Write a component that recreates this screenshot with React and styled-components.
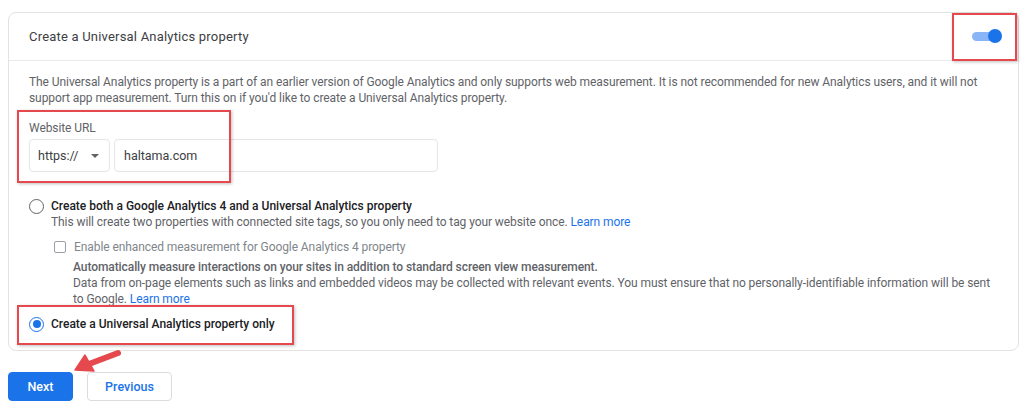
import React from 'react'
import styled, { createGlobalStyle } from 'styled-components'

const Global = createGlobalStyle`
  body {
    margin: 0;
    background: #fff;
    font-family: Roboto, "Liberation Sans", Arial, sans-serif;
    color: #3c4043;
  }
`

const Page = styled.div`
  position: relative;
  width: 1024px;
  height: 411px;
  padding: 12px 0 0 8px;
  box-sizing: border-box;
`

const Card = styled.div`
  width: 1011px;
  border: 1px solid #e3e3e3;
  border-radius: 8px;
  box-sizing: border-box;
`

const Header = styled.div`
  display: flex;
  align-items: center;
  justify-content: space-between;
  height: 47px;
  padding: 0 16px 0 20px;
  border-bottom: 1px solid #e8eaed;
`

const Title = styled.div`
  font-size: 13px;
  color: #3c4043;
  letter-spacing: 0.2px;
`

const Toggle = styled.div`
  position: relative;
  width: 30px;
  height: 14px;
  display: flex;
  align-items: center;
  margin-top: -1px;
`

const Track = styled.div`
  width: 26px;
  height: 9px;
  border-radius: 5px;
  background: #8ab4f8;
`

const Thumb = styled.div`
  position: absolute;
  right: 0;
  top: 0;
  width: 14px;
  height: 14px;
  border-radius: 50%;
  background: #1a73e8;
`

const Body = styled.div`
  padding: 13px 20px 18px 20px;
  display: flex;
  flex-direction: column;
`

const Text = styled.div`
  font-size: 12px;
  line-height: 16px;
  letter-spacing: -0.08px;
  color: ${p => p.$color || '#5f6368'};
  font-weight: ${p => (p.$bold ? 500 : 400)};
  margin-left: ${p => p.$indent || 0}px;
  margin-top: ${p => p.$top || 0}px;
`

const Link = styled.a`
  color: #1a73e8;
  text-decoration: none;
`

const FieldRow = styled.div`
  display: flex;
  gap: 4px;
  margin-top: 3px;
`

const Select = styled.div`
  width: 81px;
  height: 33px;
  box-sizing: border-box;
  border: 1px solid #e4e5e7;
  border-radius: 4px;
  display: flex;
  align-items: center;
  justify-content: space-between;
  padding: 0 10px 0 8px;
  font-size: 12.5px;
  color: #3c4043;
`

const Caret = styled.span`
  width: 0;
  height: 0;
  border-left: 4px solid transparent;
  border-right: 4px solid transparent;
  border-top: 4px solid #5f6368;
`

const Input = styled.div`
  width: 324px;
  height: 33px;
  box-sizing: border-box;
  border: 1px solid #e4e5e7;
  border-radius: 4px;
  display: flex;
  align-items: center;
  padding: 0 9px;
  font-size: 12.5px;
  color: #3c4043;
`

const Option = styled.div`
  display: flex;
  align-items: center;
  gap: 7px;
  margin-top: ${p => p.$top || 0}px;
  font-size: 12px;
  line-height: 16px;
  font-weight: 500;
  color: #202124;
`

const Radio = styled.span`
  width: 15px;
  height: 15px;
  box-sizing: border-box;
  border-radius: 50%;
  border: 1.5px solid ${p => (p.$on ? '#1a73e8' : '#5f6368')};
  display: flex;
  align-items: center;
  justify-content: center;
  &::after {
    content: '';
    display: ${p => (p.$on ? 'block' : 'none')};
    width: 8px;
    height: 8px;
    border-radius: 50%;
    background: #1a73e8;
  }
`

const CheckRow = styled.div`
  display: flex;
  align-items: center;
  gap: 8px;
  margin: 9px 0 0 25px;
  font-size: 12px;
  line-height: 16px;
  letter-spacing: -0.08px;
  color: #80868b;
`

const Checkbox = styled.span`
  width: 12px;
  height: 12px;
  box-sizing: border-box;
  border: 1px solid #9aa0a6;
  border-radius: 2px;
`

const Actions = styled.div`
  display: flex;
  gap: 14px;
  margin-top: 21px;
`

const Button = styled.button`
  height: 29px;
  width: ${p => p.$w}px;
  border-radius: 4px;
  font-family: inherit;
  font-size: 12.5px;
  font-weight: 500;
  cursor: pointer;
  background: ${p => (p.$primary ? '#1a73e8' : '#fff')};
  color: ${p => (p.$primary ? '#fff' : '#1a73e8')};
  border: 1px solid ${p => (p.$primary ? '#1a73e8' : '#dadce0')};
`

const Mark = styled.div`
  position: absolute;
  border: 2px solid #e5484d;
  box-shadow: 1px 1px 3px rgba(0, 0, 0, 0.25);
  pointer-events: none;
`

const Arrow = styled.svg`
  position: absolute;
  left: 72px;
  top: 347px;
`

export default function App() {
  return (
    <>
      <Global />
      <Page>
        <Card>
          <Header>
            <Title>Create a Universal Analytics property</Title>
            <Toggle>
              <Track />
              <Thumb />
            </Toggle>
          </Header>
          <Body>
            <Text>
              The Universal Analytics property is a part of an earlier version of Google Analytics and only supports web measurement. It is not recommended for new Analytics users, and it will not support app measurement. Turn this on if you'd like to create a Universal Analytics property.
            </Text>
            <Text $top={14}>Website URL</Text>
            <FieldRow>
              <Select>
                https://
                <Caret />
              </Select>
              <Input>haltama.com</Input>
            </FieldRow>
            <Option $top={26}>
              <Radio />
              Create both a Google Analytics 4 and a Universal Analytics property
            </Option>
            <Text $indent={22}>
              This will create two properties with connected site tags, so you only need to tag your website once. <Link>Learn more</Link>
            </Text>
            <CheckRow>
              <Checkbox />
              Enable enhanced measurement for Google Analytics 4 property
            </CheckRow>
            <Text $indent={44} $top={4} $bold>
              Automatically measure interactions on your sites in addition to standard screen view measurement.
            </Text>
            <Text $indent={44}>
              Data from on-page elements such as links and embedded videos may be collected with relevant events. You must ensure that no personally-identifiable information will be sent to Google. <Link>Learn more</Link>
            </Text>
            <Option $top={9}>
              <Radio $on />
              Create a Universal Analytics property only
            </Option>
          </Body>
        </Card>
        <Actions>
          <Button $primary $w={65}>Next</Button>
          <Button $w={85}>Previous</Button>
        </Actions>

        <Mark style={{ left: 952, top: 13, width: 61, height: 44 }} />
        <Mark style={{ left: 17, top: 110, width: 210, height: 69 }} />
        <Mark style={{ left: 17, top: 305, width: 273, height: 36 }} />
        <Arrow width="50" height="28" viewBox="0 0 50 28">
          <path d="M46 6 L17 17" stroke="#e5484d" strokeWidth="6" strokeLinecap="round" />
          <path d="M3 23 L13 8 L22 24 Z" fill="#e5484d" strokeLinejoin="round" stroke="#e5484d" strokeWidth="1.5" />
        </Arrow>
      </Page>
    </>
  )
}
